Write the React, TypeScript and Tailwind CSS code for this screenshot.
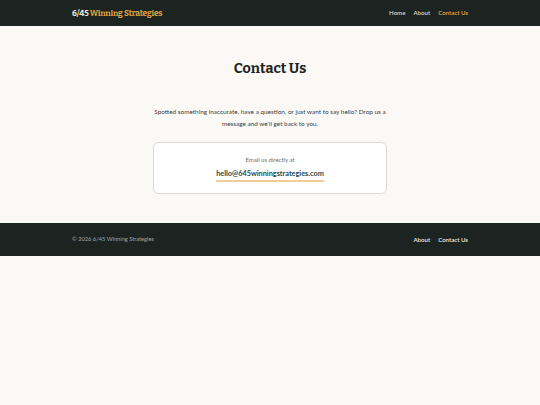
const serif = "font-['Bitter','DejaVu_Serif',serif]";
const sans = "font-['Lato','Noto_Sans',sans-serif]";

function Header() {
  return (
    <header className="h-[26px] bg-[#1c2421]">
      <div className="mx-auto flex h-full w-[396px] items-center justify-between">
        <a className={`${serif} text-[8.3px] font-bold tracking-[-0.2px] text-[#ece7dc]`}>
          6/45 <span className="text-[#e0a43f]">Winning Strategies</span>
        </a>
        <nav className={`${sans} flex items-center gap-[8px] text-[6.1px] font-semibold`}>
          <a className="text-[#d9d6cf]">Home</a>
          <a className="text-[#d9d6cf]">About</a>
          <a className="text-[#e6a73f]">Contact Us</a>
        </nav>
      </div>
    </header>
  );
}

function ContactCard() {
  return (
    <div className="mx-auto flex h-[52px] w-[234px] flex-col items-center justify-center rounded-[6px] border border-[#dddad3] bg-white pt-[2px]">
      <p className={`${sans} text-[6px] leading-[8px] text-[#6b6f6c]`}>Email us directly at</p>
      <a className={`${sans} mt-[4px] border-b-2 border-[#f0cd9a] pb-[1px] text-[7.3px] font-bold leading-[11px] text-[#1f4a4a]`}>
        hello@645winningstrategies.com
      </a>
    </div>
  );
}

function Footer() {
  return (
    <footer className="h-[33px] bg-[#1c2421]">
      <div className="mx-auto flex h-full w-[396px] items-center justify-between">
        <p className={`${sans} text-[5.7px] text-[#a4a7a3]`}>© 2026 6/45 Winning Strategies</p>
        <nav className={`${sans} flex items-center gap-[8px] text-[6.1px] font-semibold text-[#eceae4]`}>
          <a>About</a>
          <a>Contact Us</a>
        </nav>
      </div>
    </footer>
  );
}

export default function App() {
  return (
    <div className="min-h-[405px] bg-[#faf9f6]">
      <Header />
      <main className="pb-[29px] pt-[33px]">
        <h1 className={`${serif} text-center text-[14.3px] font-bold leading-[20px] text-[#1f2421]`}>Contact Us</h1>
        <p className={`${sans} mx-auto mt-[27px] w-[238px] text-center text-[6.4px] leading-[12px] text-[#3c403d]`}>
          Spotted something inaccurate, have a question, or just want to say hello? Drop us a message and we'll get back to
          you.
        </p>
        <div className="mt-[12px]">
          <ContactCard />
        </div>
      </main>
      <Footer />
    </div>
  );
}
